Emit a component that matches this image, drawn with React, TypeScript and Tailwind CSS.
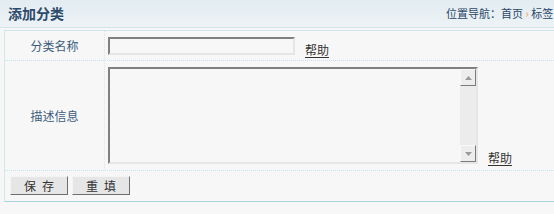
import React from 'react';

const font = { fontFamily: '"Noto Sans CJK SC", "DejaVu Sans", sans-serif' };

const Help: React.FC = () => (
  <a href="#" className="text-[12px] leading-[14px] text-[#333] underline underline-offset-2">
    帮助
  </a>
);

const App: React.FC = () => {
  return (
    <div className="w-[554px] h-[214px] overflow-hidden bg-[#f7f7f7]" style={font}>
      {/* header */}
      <div className="h-[28px] flex items-center bg-gradient-to-b from-[#e2ecf2] to-[#edf3f6] border-b border-[#d2e3ec] whitespace-nowrap">
        <div className="w-[446px] shrink-0 pl-[8px] text-[14px] font-bold text-[#2c4a6b]">添加分类</div>
        <div className="shrink-0 text-[11px] text-[#2b4766]">
          位置导航：首页 <span className="text-[#f0a030]">›</span> 标签
        </div>
      </div>

      {/* form panel */}
      <div className="mt-[2px] ml-[4px] border-l border-t border-b border-l-[#d3e7ef] border-t-[#cfe5ee] border-b-[#a9d2e1] bg-[#f7f7f7]">
        {/* row 1 */}
        <div className="flex h-[30px] border-b border-dotted border-[#c6e2ec]">
          <div className="w-[100px] shrink-0 flex items-center justify-center border-r border-dotted border-[#d3e7ef] text-[12px] text-[#3d5d7d]">
            分类名称
          </div>
          <div className="flex items-center pl-[3px]">
            <input
              type="text"
              className="w-[187px] h-[18px] bg-[#f7f7f7] border-2 border-t-[#808080] border-l-[#808080] border-b-[#e6e6e6] border-r-[#e6e6e6] outline-none"
            />
            <span className="ml-[10px] mt-[4px]">
              <Help />
            </span>
          </div>
        </div>

        {/* row 2 */}
        <div className="flex h-[110px] border-b border-dotted border-[#c6e2ec]">
          <div className="w-[100px] shrink-0 flex items-center justify-center border-r border-dotted border-[#d3e7ef] text-[12px] text-[#3d5d7d]">
            描述信息
          </div>
          <div className="flex items-start pl-[3px] pt-[6px]">
            <div className="flex w-[370px] h-[97px] border-2 border-t-[#808080] border-l-[#808080] border-b-[#e6e6e6] border-r-[#e6e6e6] bg-[#f7f7f7]">
              <textarea className="flex-1 resize-none bg-transparent outline-none" />
              <div className="w-[16px] flex flex-col bg-[#ececec]">
                <div className="h-[17px] flex items-center justify-center bg-[#ededed] border border-t-[#f8f8f8] border-l-[#f8f8f8] border-b-[#7a7a7a] border-r-[#7a7a7a]">
                  <svg width="7" height="4" viewBox="0 0 7 4"><path d="M0 4 L3.5 0 L7 4 Z" fill="#9a9a9a" /></svg>
                </div>
                <div className="flex-1" />
                <div className="h-[17px] flex items-center justify-center bg-[#ededed] border border-t-[#f8f8f8] border-l-[#f8f8f8] border-b-[#7a7a7a] border-r-[#7a7a7a]">
                  <svg width="7" height="4" viewBox="0 0 7 4"><path d="M0 0 L3.5 4 L7 0 Z" fill="#9a9a9a" /></svg>
                </div>
              </div>
            </div>
            <span className="ml-[10px] mt-[77px]">
              <Help />
            </span>
          </div>
        </div>

        {/* buttons */}
        <div className="flex items-start gap-[4px] h-[30px] pl-[5px] pt-[5px]">
          <button className="w-[58px] h-[19px] flex items-center justify-center bg-[#e6e6e6] border border-t-[#f4f4f4] border-l-[#f4f4f4] border-b-[#6e6e6e] border-r-[#6e6e6e] text-[12px] tracking-[6px] text-[#333] pl-[6px]">
            保存
          </button>
          <button className="w-[58px] h-[19px] flex items-center justify-center bg-[#e6e6e6] border border-t-[#f4f4f4] border-l-[#f4f4f4] border-b-[#6e6e6e] border-r-[#6e6e6e] text-[12px] tracking-[6px] text-[#333] pl-[6px]">
            重填
          </button>
        </div>
      </div>
    </div>
  );
};

export default App;
